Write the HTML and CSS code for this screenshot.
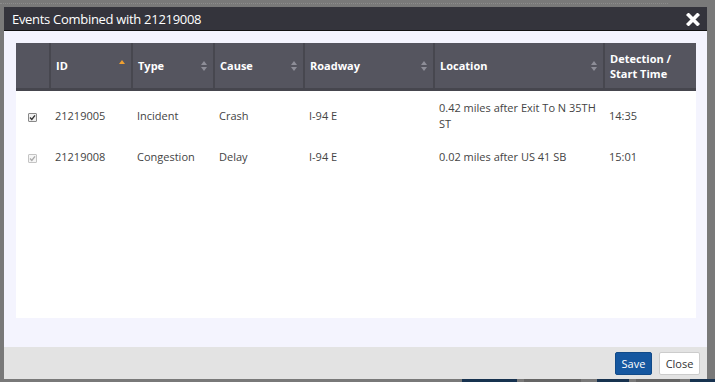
FILE: index.html
```html
<!DOCTYPE html>
<html lang="en">
<head>
    <meta charset="UTF-8">
    <meta name="viewport" content="width=device-width, initial-scale=1.0">
    <title>Events Combined</title>
    <link rel="stylesheet" href="styles.css">
</head>
<body>
    <!-- page behind the dialog -->
    <div class="page">
        <div class="page-rule"></div>
        <div class="page-toolbar">
            <span class="tb-btn tb-blue tb-combine"></span>
            <span class="tb-btn tb-grey tb-uncombine"></span>
            <span class="tb-btn tb-blue tb-clear"></span>
            <span class="tb-btn tb-grey tb-edit"></span>
            <span class="tb-btn tb-blue tb-last"></span>
        </div>
    </div>
    <div class="overlay"></div>

    <div class="modal">
        <div class="modal-header">
            <span class="modal-title">Events Combined with 21219008</span>
            <span class="modal-x">
                <svg width="14" height="13" viewBox="0 0 14 13">
                    <path d="M2.5 2 L11.5 11 M11.5 2 L2.5 11" stroke="#fff" stroke-width="3.6" stroke-linecap="square"/>
                </svg>
            </span>
        </div>

        <div class="modal-body">
            <div class="grid-box">
                <table class="grid">
                    <colgroup>
                        <col class="c-check">
                        <col class="c-id">
                        <col class="c-type">
                        <col class="c-cause">
                        <col class="c-road">
                        <col class="c-loc">
                        <col class="c-time">
                    </colgroup>
                    <thead>
                        <tr>
                            <th></th>
                            <th><div class="th-in">ID <span class="sort sort-up"></span></div></th>
                            <th><div class="th-in">Type <span class="sort"></span></div></th>
                            <th><div class="th-in">Cause <span class="sort"></span></div></th>
                            <th><div class="th-in">Roadway <span class="sort"></span></div></th>
                            <th><div class="th-in">Location <span class="sort"></span></div></th>
                            <th><div class="th-in">Detection /<br>Start Time</div></th>
                        </tr>
                    </thead>
                    <tbody>
                        <tr>
                            <td class="td-check"><span class="check"><svg width="7" height="7" viewBox="0 0 7 7"><path d="M1 3.6 L2.8 5.4 L6 1.4" stroke="#333" stroke-width="1.4" fill="none"/></svg></span></td>
                            <td>21219005</td>
                            <td>Incident</td>
                            <td>Crash</td>
                            <td>I-94 E</td>
                            <td>0.42 miles after Exit To N 35TH ST</td>
                            <td>14:35</td>
                        </tr>
                        <tr>
                            <td class="td-check"><span class="check check-off"><svg width="7" height="7" viewBox="0 0 7 7"><path d="M1 3.6 L2.8 5.4 L6 1.4" stroke="#aaa" stroke-width="1.4" fill="none"/></svg></span></td>
                            <td>21219008</td>
                            <td>Congestion</td>
                            <td>Delay</td>
                            <td>I-94 E</td>
                            <td>0.02 miles after US 41 SB</td>
                            <td>15:01</td>
                        </tr>
                    </tbody>
                </table>
            </div>
        </div>

        <div class="modal-footer">
            <button class="btn btn-save">Save</button>
            <button class="btn btn-close">Close</button>
        </div>
    </div>
</body>
</html>
```

FILE: styles.css
```css
body {
    margin: 0;
    width: 715px;
    height: 382px;
    overflow: hidden;
    font-family: "Open Sans", "Liberation Sans", sans-serif;
    background: #dcdcdc;
    position: relative;
}

/* background page */
.page {
    height: 382px;
    position: relative;
}
.page-rule {
    height: 3px;
    border-bottom: 1px dotted #ffffff;
    width: 668px;
}
.page-toolbar {
    position: absolute;
    left: 0;
    bottom: 0;
    width: 715px;
    height: 3px;
    overflow: hidden;
}
.tb-btn {
    position: absolute;
    top: 0;
    height: 3px;
}
.tb-blue { background: #2a5c90; }
.tb-grey { background: #b8b8b8; }
.tb-combine { left: 462px; width: 55px; }
.tb-uncombine { left: 524px; width: 57px; }
.tb-clear { left: 597px; width: 32px; }
.tb-edit { left: 636px; width: 44px; }
.tb-last { left: 690px; width: 30px; }

.overlay {
    position: absolute;
    inset: 0;
    background: rgba(0, 0, 0, 0.45);
}

/* dialog */
.modal {
    position: absolute;
    left: 4px;
    top: 7px;
    width: 703px;
    height: 372px;
    display: flex;
    flex-direction: column;
    background: #f4f4fe;
}
.modal-header {
    height: 23px;
    background: #34343c;
    border-bottom: 1px solid #111;
    display: flex;
    align-items: center;
    justify-content: space-between;
    padding: 0 7px 0 8px;
}
.modal-title {
    color: #fff;
    font-size: 13px;
    letter-spacing: -0.3px;
}
.modal-x {
    display: flex;
    margin-top: 1px;
}

.modal-body {
    flex: 1;
    padding: 12px 11px 29px 12px;
}
.grid-box {
    background: #fff;
    height: 275px;
}
.grid {
    width: 680px;
    border-collapse: collapse;
    table-layout: fixed;
    font-size: 11px;
}
.c-check { width: 34px; }
.c-id { width: 82px; }
.c-type { width: 82px; }
.c-cause { width: 90px; }
.c-road { width: 130px; }
.c-loc { width: 170px; }
.c-time { width: 92px; }

.grid th {
    background: #55555f;
    color: #fff;
    font-weight: bold;
    text-align: left;
    height: 45px;
    padding: 0 5px;
    border-left: 2px solid #47474f;
    border-bottom: 3px solid #46464e;
    line-height: 15px;
}
.grid th:first-child {
    border-left: none;
}
.th-in {
    display: flex;
    align-items: center;
    justify-content: space-between;
}
.sort {
    width: 7px;
    height: 10px;
    display: inline-block;
    position: relative;
}
.sort::before,
.sort::after {
    content: "";
    position: absolute;
    left: 0;
    border-left: 3.5px solid transparent;
    border-right: 3.5px solid transparent;
}
.sort::before {
    top: 0;
    border-bottom: 4px solid #8e8e98;
}
.sort::after {
    bottom: 0;
    border-top: 4px solid #8e8e98;
}
.sort-up {
    height: 7px;
    margin-top: -5px;
}
.sort-up::before {
    border-bottom-color: #f0a030;
}
.sort-up::after {
    display: none;
}

.grid td {
    color: #444;
    padding: 9px 5px 8px;
    line-height: 16px;
    vertical-align: middle;
}
.td-check {
    text-align: center;
}
.check {
    display: inline-flex;
    width: 9px;
    height: 9px;
    border: 1px solid #888;
    box-sizing: border-box;
    border-radius: 1px;
    background: #f0f0f0;
    align-items: center;
    justify-content: center;
    vertical-align: middle;
    margin-left: -1px;
}
.check-off {
    border-color: #c4c4c4;
    background: #f6f6f6;
}

.modal-footer {
    height: 32px;
    background: #e3e3e3;
    display: flex;
    justify-content: flex-end;
    align-items: flex-start;
    gap: 7px;
    padding: 5px 7px 0 0;
    box-sizing: border-box;
}
.btn {
    height: 23px;
    font-family: "Open Sans", "Liberation Sans", sans-serif;
    font-size: 11px;
    padding: 0;
    border-radius: 2px;
}
.btn-save {
    width: 37px;
    background: #1557a0;
    border: 1px solid #114a88;
    color: #fff;
}
.btn-close {
    width: 41px;
    background: #fff;
    border: 1px solid #ccc;
    color: #333;
}
```
